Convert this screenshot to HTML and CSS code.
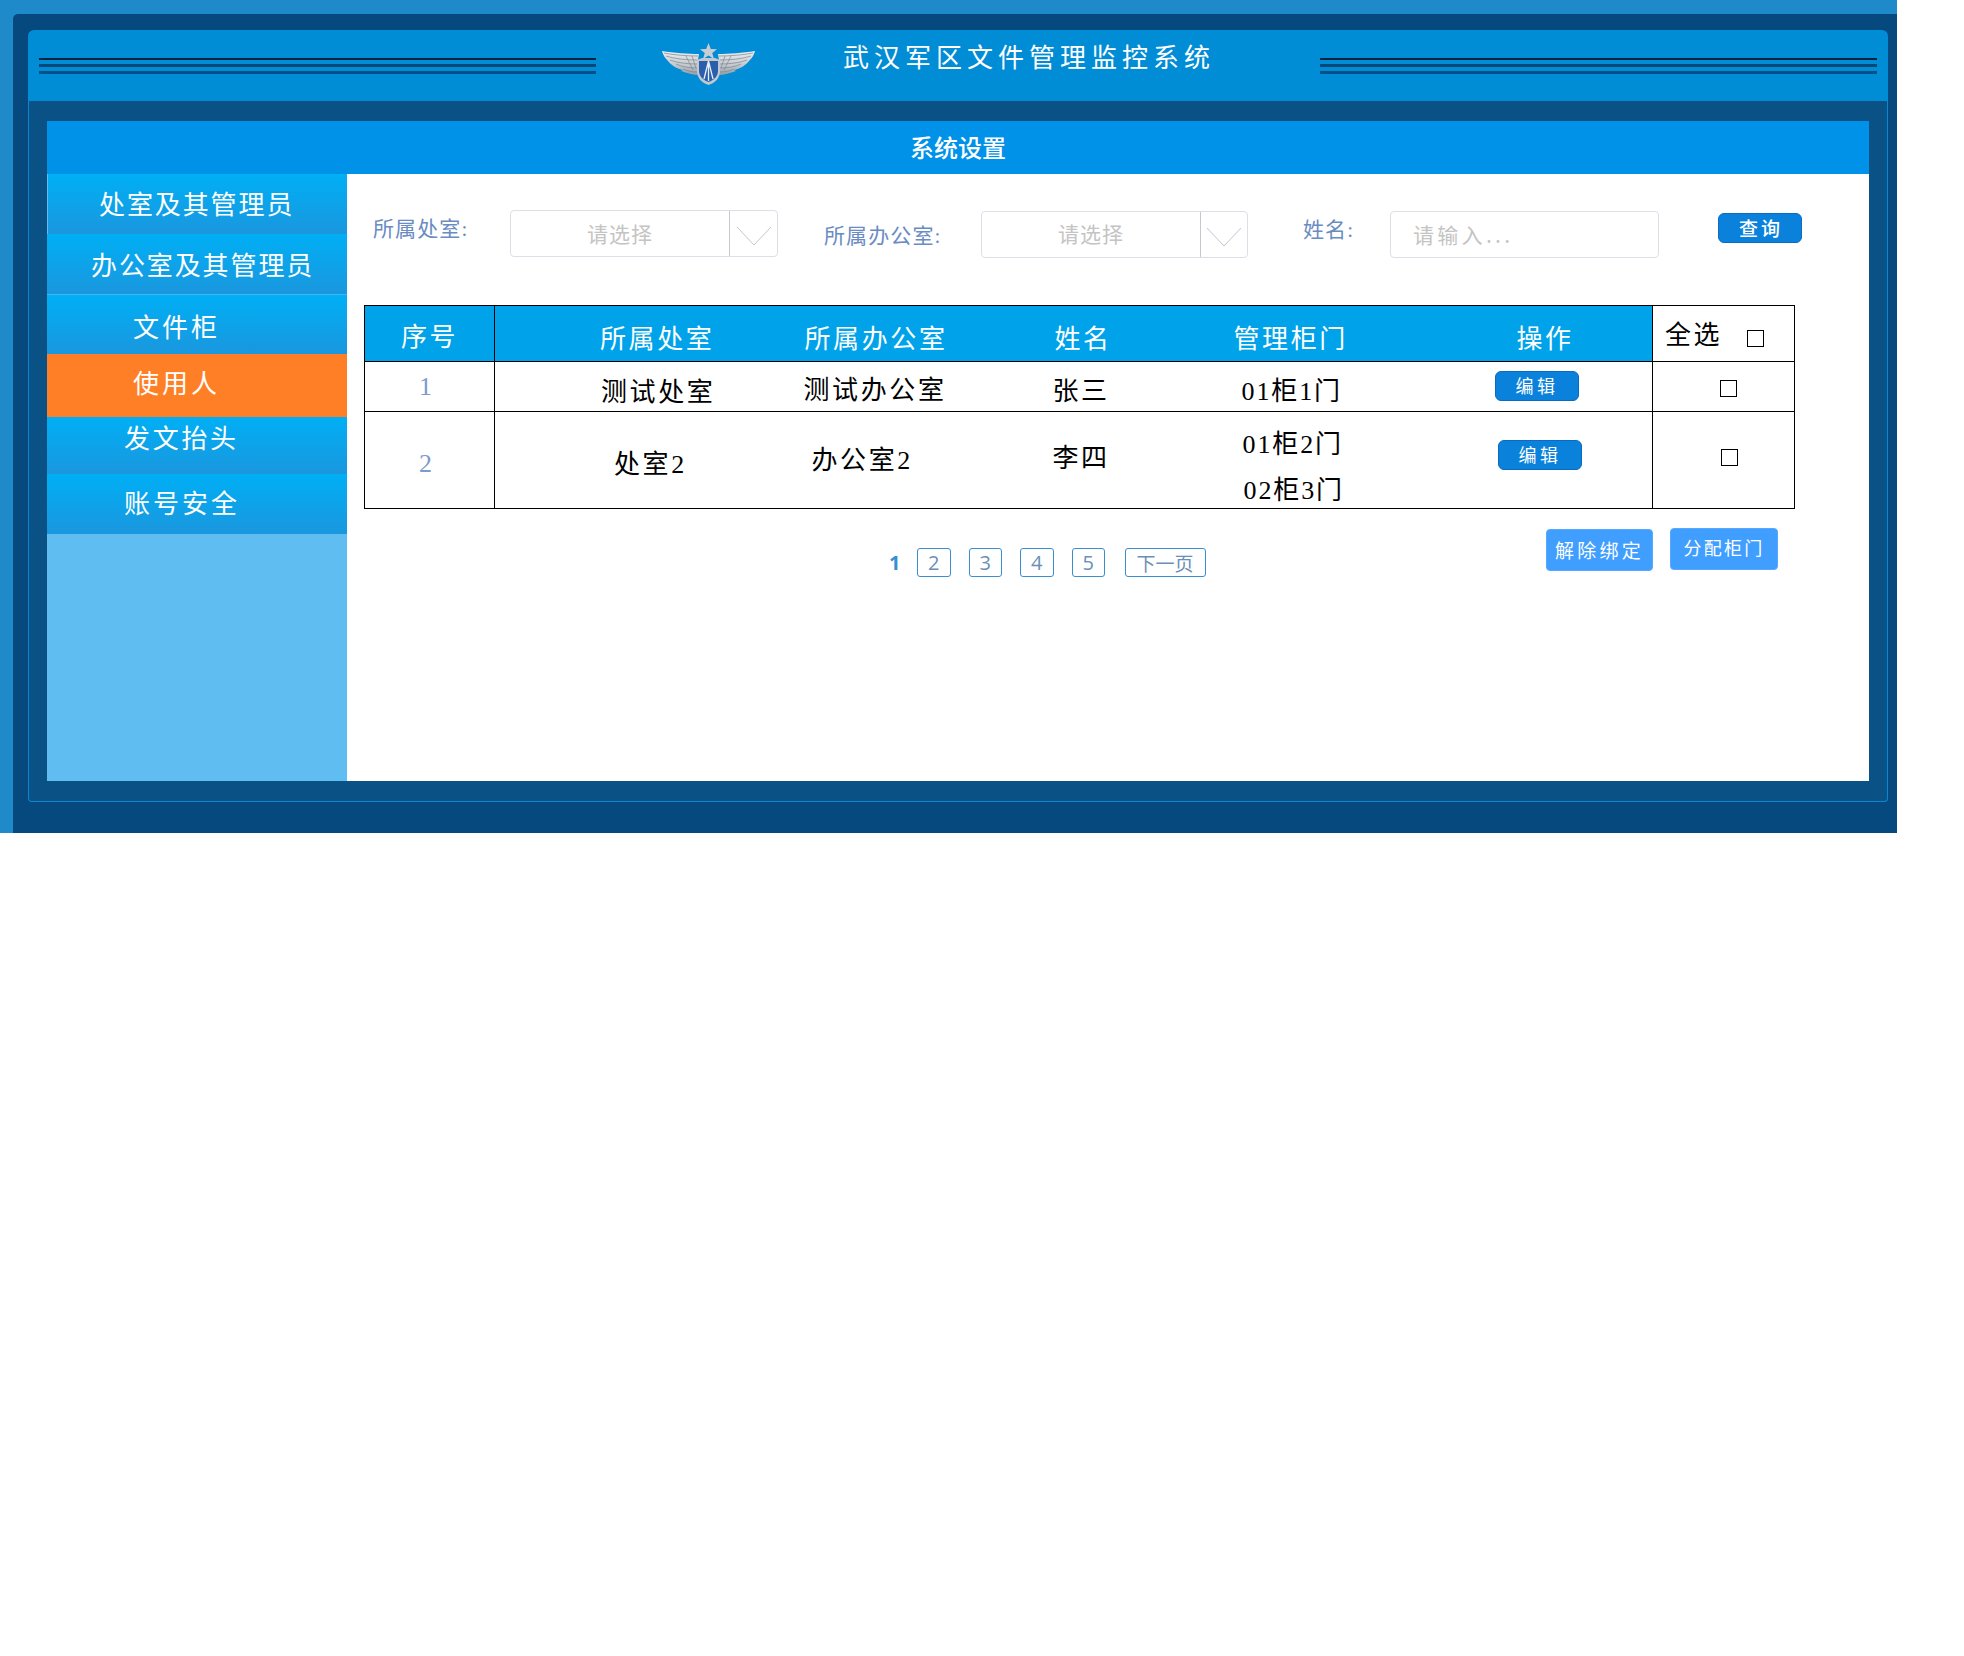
FILE: index.html
```html
<!DOCTYPE html>
<html lang="zh-CN">
<head>
<meta charset="utf-8">
<title>武汉军区文件管理监控系统</title>
<link rel="stylesheet" href="styles.css">
</head>
<body>
<div class="page">
  <div class="frame">
    <header class="top">
      <div class="rule"><i></i><i></i><i></i></div>
      <svg class="logo" viewBox="0 0 93 42" width="93" height="42" aria-label="logo">
        <defs>
          <linearGradient id="silver" x1="0" y1="0" x2="0" y2="1">
            <stop offset="0" stop-color="#eef0f2"/>
            <stop offset=".6" stop-color="#c2c8ce"/>
            <stop offset="1" stop-color="#949ca4"/>
          </linearGradient>
        </defs>
        <g fill="url(#silver)">
          <path d="M0 8 C12 10 26 11 37 11 L36 17 L36 32 C31 32 25 30 19 28 L21 27 C15 26 9 22 6 18 C3 15 1 12 0 8Z"/>
          <path d="M93 8 C81 10 67 11 56 11 L57 17 L57 32 C62 32 68 30 74 28 L72 27 C78 26 84 22 87 18 C90 15 92 12 93 8Z"/>
        </g>
        <g fill="none" stroke="#7c858d" stroke-width=".7">
          <path d="M2 10 C12 12 25 13 36 13"/>
          <path d="M4 13 C13 16 25 17 35 17"/>
          <path d="M8 17 C16 20 26 21 35 21"/>
          <path d="M14 21 C20 24 28 25 35 25"/>
          <path d="M21 26 C25 28 30 29 35 29"/>
          <path d="M24 13 L31 27 M30 13 L34 25"/>
          <path d="M91 10 C81 12 68 13 57 13"/>
          <path d="M89 13 C80 16 68 17 58 17"/>
          <path d="M85 17 C77 20 67 21 58 21"/>
          <path d="M79 21 C73 24 65 25 58 25"/>
          <path d="M72 26 C68 28 63 29 58 29"/>
          <path d="M69 13 L62 27 M63 13 L59 25"/>
        </g>
        <path d="M46.5 0 L48.8 6 L55 6.3 L50.2 10 L52 16 L46.5 12.6 L41 16 L42.8 10 L38 6.3 L44.2 6 Z" fill="#c9ced3"/>
        <path d="M35 17 L40 15 L53 15 L58 17 L58 28 C58 35 53 40 46.5 42 C40 40 35 35 35 28Z" fill="#c3c9cf"/>
        <path d="M37 18 L56 18 L56 28 C56 33 52 37 46.5 39 C41 37 37 33 37 28Z" fill="#2a5fae"/>
        <path d="M46.5 18 L42 36 M46.5 18 L51 36 M46.5 18 V38" stroke="#e8edf2" stroke-width="1.3" fill="none"/>
      </svg>
      <h1 class="brand">武汉军区文件管理监控系统</h1>
      <div class="rule rule-right"><i></i><i></i><i></i></div>
    </header>
    <div class="panel">
      <div class="title-bar">系统设置</div>
      <div class="main">
        <nav class="side">
          <a class="nav nav-dept">处室及其管理员</a>
          <a class="nav nav-office">办公室及其管理员</a>
          <a class="nav nav-cabinet">文件柜</a>
          <a class="nav nav-user">使用人</a>
          <a class="nav nav-head">发文抬头</a>
          <a class="nav nav-account">账号安全</a>
        </nav>
        <section class="work">
          <form class="filters">
            <label class="lbl lbl-dept">所属处室:</label>
            <div class="sel sel-dept">
              <span class="sel-value">请选择</span>
              <span class="sel-arrow"><svg width="34" height="18" viewBox="0 0 34 18"><path d="M0 0 L17 18 L34 0" fill="none" stroke="#c2c6cc" stroke-width="1"/></svg></span>
            </div>
            <label class="lbl lbl-office">所属办公室:</label>
            <div class="sel sel-office">
              <span class="sel-value">请选择</span>
              <span class="sel-arrow"><svg width="34" height="18" viewBox="0 0 34 18"><path d="M0 0 L17 18 L34 0" fill="none" stroke="#c2c6cc" stroke-width="1"/></svg></span>
            </div>
            <label class="lbl lbl-name">姓名:</label>
            <input class="name-input" type="text" placeholder="请输入...">
            <button class="query" type="button">查询</button>
          </form>
          <table class="grid">
            <colgroup>
              <col class="c-no"><col class="c-dept"><col class="c-office"><col class="c-name"><col class="c-door"><col class="c-op"><col class="c-all">
            </colgroup>
            <thead>
              <tr>
                <th class="th-no">序号</th>
                <th class="th-dept">所属处室</th>
                <th class="th-office">所属办公室</th>
                <th class="th-name">姓名</th>
                <th class="th-door">管理柜门</th>
                <th class="th-op">操作</th>
                <td class="th-all">全选<input class="chk chk-all" type="checkbox"></td>
              </tr>
            </thead>
            <tbody>
              <tr class="row-one">
                <td class="no r1-no">1</td>
                <td class="r1-dept">测试处室</td>
                <td class="r1-office">测试办公室</td>
                <td class="r1-name">张三</td>
                <td class="r1-door">01柜1门</td>
                <td class="r1-op"><button class="edit" type="button">编辑</button></td>
                <td class="r1-chk"><input class="chk" type="checkbox"></td>
              </tr>
              <tr class="row-two">
                <td class="no r2-no">2</td>
                <td class="r2-dept">处室2</td>
                <td class="r2-office">办公室2</td>
                <td class="r2-name">李四</td>
                <td class="r2-door"><div>01柜2门</div><div class="door-next">02柜3门</div></td>
                <td class="r2-op"><button class="edit" type="button">编辑</button></td>
                <td class="r2-chk"><input class="chk" type="checkbox"></td>
              </tr>
            </tbody>
          </table>
          <div class="foot">
            <div class="pager">
              <span class="cur">1</span>
              <a class="pg">2</a>
              <a class="pg">3</a>
              <a class="pg">4</a>
              <a class="pg">5</a>
              <a class="pg pg-next">下一页</a>
            </div>
            <button class="act act-unbind" type="button">解除绑定</button>
            <button class="act act-assign" type="button">分配柜门</button>
          </div>
        </section>
      </div>
    </div>
  </div>
</div>
</body>
</html>
```

FILE: styles.css
```css
* { box-sizing: border-box; }
html, body { margin: 0; padding: 0; background: #fff; }
body { font-family: "Liberation Serif", "Noto Sans CJK SC", serif; }

.page { width: 1897px; height: 833px; padding: 14px 0 0 13px; background: #1e8ac9; }
.frame { width: 1884px; height: 819px; padding: 16px 9px 0 15px; background: #05497f; border-radius: 5px 0 0 0; }

.top { display: flex; align-items: flex-start; height: 71px; padding-left: 11px; background: #018cd6; border-radius: 6px 6px 0 0; }
.rule { width: 557px; margin-top: 28px; display: flex; flex-direction: column; gap: 4px; }
.rule i { display: block; height: 3px; background: #04508a; }
.rule i:first-child { height: 2px; background: #03233f; }
.rule i:nth-child(2) { background: #04487a; }
.rule-right { margin-left: 111px; }
.logo { margin: 13px 0 0 66px; flex: none; }
.brand { margin: 12px 0 0 88px; width: 366px; flex: none; font-size: 26px; font-weight: 400; line-height: 34px; letter-spacing: 5px; color: #fff; white-space: nowrap; }

.panel { width: 1860px; height: 701px; padding: 20px 18px 0; background: #0a5186; border: 1px solid #0b86d4; border-top: 0; border-radius: 0 0 4px 4px; }
.title-bar { height: 53px; background: #0091e9; color: #fff; text-align: center; font-size: 24px; font-weight: 500; line-height: 52px; font-family: "Noto Sans CJK SC", sans-serif; }
.main { display: flex; height: 607px; background: #fff; }

.side { width: 300px; flex: none; background: #60bdf2; }
.nav { display: block; font-size: 26px; line-height: 34px; font-weight: 400; color: #fff; white-space: nowrap; background: linear-gradient(#00aff5, #1a97de); }
.nav-dept { height: 60px; padding: 15px 0 0 51px; margin-left: 1px; letter-spacing: 1.9px; }
.nav-office { height: 61px; padding: 16px 0 0 44px; letter-spacing: 1.9px; border-bottom: 1px solid #3fb6f4; }
.nav-cabinet { height: 59px; padding: 17px 0 0 86px; letter-spacing: 3px; }
.nav-user { height: 63px; padding: 14px 0 0 86px; letter-spacing: 3px; background: #ff7f27; }
.nav-head { height: 57px; padding: 6px 0 0 77px; letter-spacing: 2.7px; }
.nav-account { height: 60px; padding: 14px 0 0 77px; letter-spacing: 3px; }

.work { flex: 1; min-width: 0; }
.filters { display: flex; align-items: flex-start; height: 84px; padding: 36px 0 0 26px; margin: 0 0 47px; }
.lbl { font-size: 21px; font-weight: 400; line-height: 30px; letter-spacing: 1.1px; color: #6a8cc2; white-space: nowrap; }
.lbl-dept { width: 137px; margin-top: 4px; }
.lbl-office { width: 157px; margin: 11px 0 0 46px; }
.lbl-name { width: 87px; margin: 5px 0 0 55px; }

.sel { display: flex; height: 47px; border: 1px solid #dcdfe6; border-radius: 4px; color: #c4c4c4; font-size: 21px; font-weight: 400; }
.sel-dept { width: 268px; }
.sel-office { width: 267px; margin-top: 1px; }
.sel-value { width: 219px; flex: none; text-align: center; line-height: 45px; padding-top: 2px; letter-spacing: 1px; border-right: 1px solid #c6cad0; }
.sel-office .sel-value { padding-top: 1px; }
.sel-arrow { flex: 1; display: flex; justify-content: center; padding-top: 16px; }
.sel-arrow svg { display: block; }

.name-input { width: 269px; height: 47px; margin-top: 1px; padding: 0 0 2px 22px; border: 1px solid #dcdfe6; border-radius: 4px; outline: 0; font: 400 21px "Noto Sans CJK SC", sans-serif; letter-spacing: 3.3px; }
.name-input::placeholder { color: #c4c4c4; opacity: 1; }

.query { width: 84px; height: 30px; margin: 3px 0 0 59px; padding: 0 0 0 2px; border: 1px solid #0a6cc0; border-radius: 6px; background: #0a82dc; color: #fff; font: 500 19px/26px "Noto Sans CJK SC", sans-serif; letter-spacing: 3px; }

.grid { width: 1430px; margin-left: 17px; table-layout: fixed; border-collapse: collapse; border: 1px solid #000; font-size: 26px; font-weight: 400; line-height: 30px; letter-spacing: 2.6px; color: #000; white-space: nowrap; }
.c-no { width: 130px; } .c-dept { width: 305px; } .c-office { width: 250px; } .c-name { width: 180px; } .c-door { width: 260px; } .c-op { width: 163px; } .c-all { width: 142px; }
.grid th, .grid td { padding: 0; vertical-align: top; text-align: left; }
.grid thead tr { height: 56px; border-bottom: 1px solid #000; }
.grid th { font-weight: 400; color: #fff; background: #00a3e9; padding-top: 19px; }
.grid .th-no { padding: 17px 0 0 36px; border-right: 1px solid #000; }
.grid .th-dept { padding-left: 105px; }
.grid .th-office { padding-left: 5px; }
.grid .th-name { padding-left: 5px; }
.grid .th-door { padding-left: 4px; }
.grid .th-op { padding-left: 27px; }
.grid .th-all { padding: 15px 0 0 12px; border-left: 1px solid #000; }
.chk { appearance: none; -webkit-appearance: none; display: block; width: 17px; height: 17px; margin: 0; border: 1px solid #000; border-radius: 0; background: #fff; }
.chk-all { display: inline-block; vertical-align: top; margin: 9px 0 0 25px; }

.row-one { height: 50px; border-bottom: 1px solid #000; }
.row-two { height: 97px; }
.grid .no { color: #7a9bcf; text-align: center; letter-spacing: 0; }
.grid .r1-no { padding: 10px 8px 0 0; border-right: 1px solid #000; }
.grid .r1-dept { padding: 16px 0 0 106px; }
.grid .r1-office { padding: 14px 0 0 4px; }
.grid .r1-name { padding: 15px 0 0 3px; }
.grid .r1-door { padding: 15px 0 0 12px; letter-spacing: 1.9px; }
.grid .r1-op { padding: 9px 0 0 5px; }
.grid .r1-chk { padding: 18px 0 0 67px; border-left: 1px solid #000; }
.grid .r2-no { padding: 37px 8px 0 0; border-right: 1px solid #000; }
.grid .r2-dept { padding: 38px 0 0 119px; }
.grid .r2-office { padding: 34px 0 0 12px; }
.grid .r2-name { padding: 32px 0 0 3px; }
.grid .r2-door { padding: 18px 0 0 13px; letter-spacing: 1.9px; }
.door-next { margin-top: 16px; padding-left: 1px; }
.grid .r2-op { padding: 28px 0 0 8px; }
.grid .r2-chk { padding: 37px 0 0 68px; border-left: 1px solid #000; }

.edit { display: block; width: 84px; height: 30px; padding: 0 0 2px 1px; border: 1px solid #0a6cc0; border-radius: 6px; background: #0a82dc; color: #fff; font: 400 18px/26px "Noto Sans CJK SC", sans-serif; letter-spacing: 3.4px; }

.foot { display: flex; align-items: flex-start; height: 62px; margin-top: 19px; padding: 0 91px 0 542px; }
.pager { display: flex; margin: 20px auto 0 0; font: 400 20px/27px "Open Sans", sans-serif; color: #6a8fb8; }
.cur { width: 28px; font-weight: 700; color: #3a8fd0; line-height: 29px; }
.pg { width: 33.5px; height: 29px; margin-right: 18px; border: 1px solid #3a8fd0; border-radius: 3px; text-align: center; }
.pg:nth-child(5) { margin-right: 19.5px; }
.pg-next { width: 81px; margin: 0; font-family: "Noto Sans CJK SC", sans-serif; font-weight: 400; font-size: 19px; letter-spacing: 0; }

.act { height: 42px; padding: 0; border: 1px solid #56a9ff; border-radius: 4px; background: #409eff; color: #fff; font: 400 19px "Noto Sans CJK SC", sans-serif; white-space: nowrap; }
.act-unbind { width: 107px; margin-top: 1px; padding-bottom: 2px; letter-spacing: 3.2px; }
.act-assign { width: 108px; margin-left: 17px; font-size: 18px; letter-spacing: 2.2px; padding-bottom: 5px; }
```
